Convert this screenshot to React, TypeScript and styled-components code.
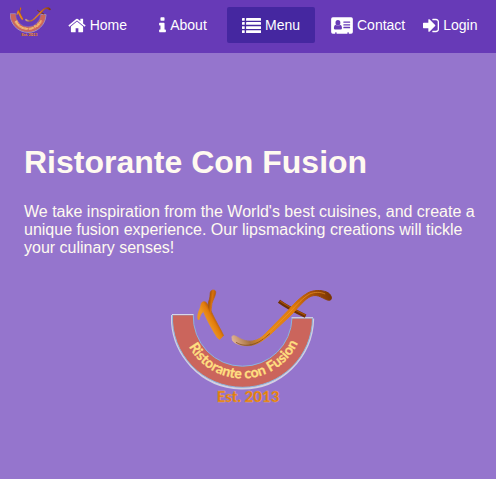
import React from "react";
import styled, { createGlobalStyle, css } from "styled-components";

const GlobalStyle = createGlobalStyle`
  *, *::before, *::after { box-sizing: border-box; }
  body {
    margin: 0;
    background: #9575cd;
    color: floralwhite;
    font-family: "Liberation Sans", Arial, sans-serif;
  }
`;

const Header = styled.header`
  display: flex;
  align-items: center;
  min-height: 53px;
  padding: 0 10px;
  background: #673ab7;
`;

const BrandLink = styled.a`
  display: block;
  flex: none;
  align-self: flex-start;
  padding-top: 7px;
`;

const BrandLogo = styled.svg`
  display: block;
  width: 41px;
  height: 30px;
`;

const Nav = styled.nav`
  display: flex;
  align-items: center;
  flex: none;
  padding-bottom: 3px;
`;

const navItem = css`
  display: inline-flex;
  align-items: center;
  justify-content: center;
  flex: none;
  gap: 4px;
  height: 36px;
  border: 0;
  border-radius: 2px;
  color: #fff;
  font-family: inherit;
  font-size: 14px;
  line-height: 36px;
  text-decoration: none;
  white-space: nowrap;
  cursor: pointer;
`;

const NavLink = styled.a<{ $active?: boolean; $wide?: boolean }>`
  ${navItem}
  min-width: 88px;
  padding: 0 ${(p) => (p.$wide ? 16 : 12)}px;
  background: ${(p) => (p.$active ? "#4527a0" : "transparent")};

  &:first-child {
    justify-content: flex-end;
  }
`;

const LoginButton = styled.button`
  ${navItem}
  padding: 0 2px;
  background: transparent;
`;

const Icon = styled.svg`
  display: block;
  flex: none;
  height: 19px;
  fill: currentColor;
`;

const Hero = styled.main`
  padding: 90px 16px 72px 24px;
`;

const Title = styled.h1`
  margin: 0;
  font-size: 32px;
  line-height: 38px;
`;

const Intro = styled.p`
  margin: 22px 0 0;
  font-size: 16px;
  line-height: 18px;
`;

const HeroLogo = styled.svg`
  display: block;
  width: 162px;
  height: 117px;
  margin: 32px auto 0;
`;

const ArcText = styled.text`
  font-family: Lato, "Open Sans", sans-serif;
  font-size: 14px;
  font-weight: 700;
  fill: #ffdf80;
  stroke: #ffdf80;
  stroke-width: 0.3;
`;

const YearText = styled.text`
  font-family: Lato, "Open Sans", sans-serif;
  font-size: 15px;
  font-weight: 900;
  fill: #e07a08;
  stroke: #eab06a;
  stroke-width: 0.3;
`;

const HomeIcon = () => (
  <Icon viewBox="64 0 1664 1792" width="18" aria-hidden="true">
    <path d="M1472 992v480q0 26-19 45t-45 19h-384v-384h-256v384h-384q-26 0-45-19t-19-45v-480q0-1 .5-3t.5-3l575-474 575 474q1 2 1 6zm223-69l-62 74q-8 9-21 11h-3q-13 0-21-7l-692-577-692 577q-12 8-24 7-13-2-21-11l-62-74q-8-10-7-23.5t11-21.5l719-599q32-26 76-26t76 26l244 204v-195q0-14 9-23t23-9h192q14 0 23 9t9 23v408l219 182q10 8 11 21.5t-7 23.5z" />
  </Icon>
);

const InfoIcon = () => (
  <Icon viewBox="576 0 640 1792" width="7" aria-hidden="true">
    <path d="M1216 1344v128q0 26-19 45t-45 19h-512q-26 0-45-19t-19-45v-128q0-26 19-45t45-19h64v-384h-64q-26 0-45-19t-19-45v-128q0-26 19-45t45-19h384q26 0 45 19t19 45v576h64q26 0 45 19t19 45zm-128-1152v192q0 26-19 45t-45 19h-256q-26 0-45-19t-19-45v-192q0-26 19-45t45-19h256q26 0 45 19t19 45z" />
  </Icon>
);

const ListIcon = () => (
  <Icon viewBox="0 0 1792 1792" width="19" aria-hidden="true">
    {[192, 576, 960, 1344].map((y) => (
      <React.Fragment key={y}>
        <rect x="0" y={y} width="256" height="256" rx="32" />
        <rect x="384" y={y} width="1408" height="256" rx="32" />
      </React.Fragment>
    ))}
  </Icon>
);

const CardIcon = () => (
  <Icon viewBox="0 0 2048 1792" width="22" aria-hidden="true">
    <path
      fillRule="evenodd"
      d="M160 128H1888Q2048 128 2048 288V1504Q2048 1664 1888 1664H1664V1568Q1664 1536 1632 1536H1568Q1536 1536 1536 1568V1664H512V1568Q512 1536 480 1536H416Q384 1536 384 1568V1664H160Q0 1664 0 1504V288Q0 128 160 128ZM1024 1131Q1024 880 850 832Q760 914 640 914T430 832Q256 880 256 1131Q256 1280 384 1280H896Q1024 1280 1024 1131ZM870 640A230 256 0 1 0 410 640A230 256 0 1 0 870 640ZM1184 1024Q1152 1024 1152 1056V1120Q1152 1152 1184 1152H1760Q1792 1152 1792 1120V1056Q1792 1024 1760 1024ZM1184 768Q1152 768 1152 800V864Q1152 896 1184 896H1760Q1792 896 1792 864V800Q1792 768 1760 768ZM1184 512Q1152 512 1152 544V608Q1152 640 1184 640H1760Q1792 640 1792 608V544Q1792 512 1760 512Z"
    />
  </Icon>
);

const SignInIcon = () => (
  <Icon viewBox="128 0 1536 1792" width="16" aria-hidden="true">
    <path d="M1312 896q0 26-19 45l-544 544q-19 19-45 19t-45-19-19-45v-288h-448q-26 0-45-19t-19-45v-384q0-26 19-45t45-19h448v-288q0-26 19-45t45-19 45 19l544 544q19 19 19 45zm352-352v704q0 119-84.5 203.5t-203.5 84.5h-320q-13 0-22.5-9.5t-9.5-22.5q0-4-1-20t-.5-26.5 3-23.5 10-19.5 20.5-6.5h320q66 0 113-47t47-113v-704q0-66-47-113t-113-47h-312l-11.5-1-11.5-3-8-5.5-7-9-2-13.5q0-4-1-20t-.5-26.5 3-23.5 10-19.5 20.5-6.5h320q119 0 203.5 84.5t84.5 203.5z" />
  </Icon>
);

function LogoArt({ id }: { id: string }) {
  return (
    <>
      <defs>
        <linearGradient id={`${id}-swoosh`} gradientUnits="userSpaceOnUse" x1="61" y1="50" x2="160" y2="8">
          <stop offset="0" stopColor="#e0b394" />
          <stop offset="0.14" stopColor="#a8713c" />
          <stop offset="0.26" stopColor="#e58a1c" />
          <stop offset="0.62" stopColor="#e27c0c" />
          <stop offset="0.85" stopColor="#a84f08" />
          <stop offset="1" stopColor="#7a3503" />
        </linearGradient>
        <linearGradient id={`${id}-stem`} gradientUnits="userSpaceOnUse" x1="36" y1="33" x2="45" y2="28">
          <stop offset="0" stopColor="#ed9622" />
          <stop offset="0.6" stopColor="#e27c0c" />
          <stop offset="1" stopColor="#a85208" />
        </linearGradient>
        <linearGradient id={`${id}-arm`} gradientUnits="userSpaceOnUse" x1="37" y1="10" x2="45" y2="11">
          <stop offset="0" stopColor="#8e4405" />
          <stop offset="0.5" stopColor="#d8720b" />
          <stop offset="1" stopColor="#a84f08" />
        </linearGradient>
        <path id={`${id}-arc`} d="M10.5 28.5A61 61 0 0 0 132.5 28.5" />
      </defs>
      <path d="M1 26A70.5 71.5 0 0 0 142 29.5" fill="none" stroke="#d3d0e2" strokeWidth="2.4" />
      <path
        d="M1.5 25.8H22.3A49.2 49.5 0 0 0 71.5 77.2A49.2 49.5 0 0 0 121 29H141.5A70 69.5 0 0 1 71.5 98.3A70 69.5 0 0 1 1.5 25.8Z"
        fill="#cb655c"
        stroke="#8cb4dc"
        strokeWidth="1"
      />
      <path d="M1 25.5H22.5M120.5 28.7H142" fill="none" stroke="#d8d6e8" strokeWidth="1" />
      <ArcText textAnchor="middle">
        <textPath href={`#${id}-arc`} startOffset="51%">
          Ristorante con Fusion
        </textPath>
      </ArcText>
      <path
        d="M27 30.5C26 27 27.4 23 29.2 19L30.3 14.5C31 12.5 33.6 12 35.2 13.5C38 17 40.8 24 44.2 30.5C47.4 36.8 51.2 43 52.6 46.6L48.7 50.4L46.6 49C41.6 41.5 36 31 32.4 22.5C30.4 24 28.6 27 28.2 30.5Z"
        fill={`url(#${id}-stem)`}
        stroke={`url(#${id}-stem)`}
        strokeWidth="0.7"
      />
      <path
        d="M39.6 24C37.8 20 36.4 15 38.3 10.5C39.6 6.5 38.4 4 40 2C41.5 .2 45.2 .6 44.7 3.8C44.2 8 41.8 11 41 14.5C40.3 18 40.5 21 39.6 24Z"
        fill={`url(#${id}-arm)`}
        stroke={`url(#${id}-arm)`}
        strokeWidth="0.6"
      />
      <path d="M108 12.2C115 17.5 126 23 134.6 27.1" fill="none" stroke="#6d3003" strokeWidth="3.6" />
      <path d="M109 12C116 17 126 22 134.4 26.2" fill="none" stroke="#a84f08" strokeWidth="1.3" />
      <path
        d="M61.2 49.2C60.4 46.7 62.3 46 65 47.4C69 49.8 75 53 81.5 52C87.3 51.1 90.8 48.3 94.4 44.7L117.6 21C123.8 13.8 129.8 7.8 137 3.8C142.2 1 149.8 .7 155.8 3.1C159.5 4.5 161.6 9 159.6 10.9C156.8 12.5 152.5 8.7 147.6 7.1C142.7 5.6 138.6 7.2 134.1 11.2C129.5 15.4 124.4 21.5 119.8 26.3L101.3 43.6C96.4 48.2 89 54.3 81.6 56.1C74.5 57.7 66 56 62.3 52.5C61.3 51.5 61.2 50.5 61.2 49.2Z"
        fill={`url(#${id}-swoosh)`}
        stroke={`url(#${id}-swoosh)`}
        strokeWidth="1"
      />
      <path d="M65 53.3C72.5 58.2 82.2 56.8 90.4 51.3L99 44.5" fill="none" stroke="#754018" strokeWidth="0.9" opacity="0.75" />
      <path d="M92 49.5L119 23C126 15.5 132.2 8.5 138.5 5.1C144 2.6 149.7 3 154.2 5" fill="none" stroke="#f49d2b" strokeWidth="1" opacity="0.6" />
      <YearText x="77" y="113" textAnchor="middle">
        Est. 2013
      </YearText>
    </>
  );
}

export default function App() {
  return (
    <>
      <GlobalStyle />
      <Header>
        <BrandLink href="#home" aria-label="Ristorante Con Fusion">
          <BrandLogo viewBox="0 0 162 117">
            <LogoArt id="brand" />
          </BrandLogo>
        </BrandLink>
        <Nav>
          <NavLink href="#home"><HomeIcon />Home</NavLink>
          <NavLink href="#about"><InfoIcon />About</NavLink>
          <NavLink href="#menu" $active aria-current="page"><ListIcon />Menu</NavLink>
          <NavLink href="#contact" $wide><CardIcon />Contact</NavLink>
          <LoginButton type="button"><SignInIcon />Login</LoginButton>
        </Nav>
      </Header>
      <Hero>
        <Title>Ristorante Con Fusion</Title>
        <Intro>
          We take inspiration from the World's best cuisines, and create a unique fusion
          experience. Our lipsmacking creations will tickle your culinary senses!
        </Intro>
        <HeroLogo viewBox="0 0 162 117" role="img" aria-label="Ristorante con Fusion, Est. 2013">
          <LogoArt id="hero" />
        </HeroLogo>
      </Hero>
    </>
  );
}
